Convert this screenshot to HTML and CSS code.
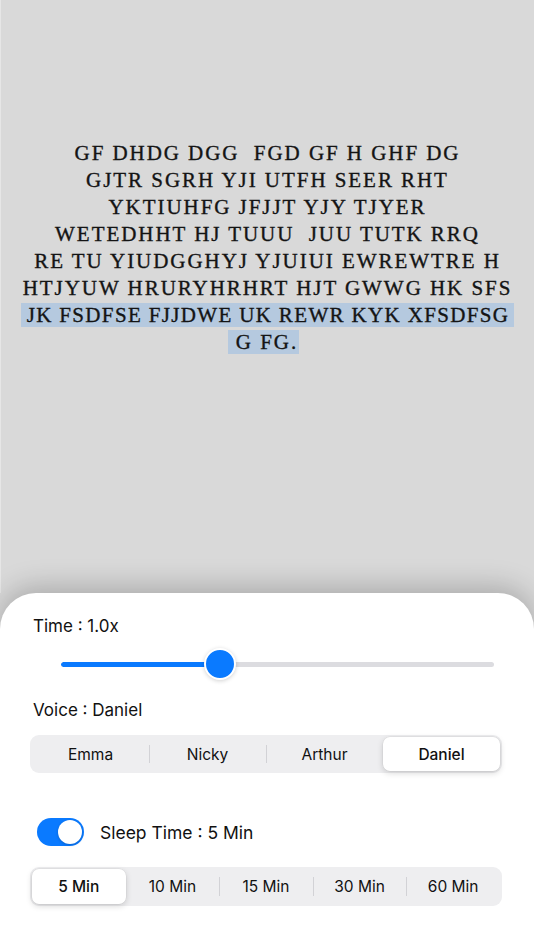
FILE: index.html
```html
<!DOCTYPE html>
<html lang="en">
<head>
<meta charset="utf-8">
<title>Reader</title>
<link rel="stylesheet" href="styles.css">
</head>
<body>
<div class="screen">
  <main class="reader">
    <p class="passage">
      <span class="ln">GF DHDG DGG&nbsp; FGD GF H GHF DG</span>
      <span class="ln">GJTR SGRH YJI UTFH SEER RHT</span>
      <span class="ln">YKTIUHFG JFJJT YJY TJYER</span>
      <span class="ln">WETEDHHT HJ TUUU&nbsp; JUU TUTK RRQ</span>
      <span class="ln">RE TU YIUDGGHYJ YJUIUI EWREWTRE H</span>
      <span class="ln">HTJYUW HRURYHRHRT HJT GWWG HK SFS</span>
      <span class="ln"><span class="hl wide">JK FSDFSE FJJDWE UK REWR KYK XFSDFSG</span></span>
      <span class="ln"><span class="hl tail">G FG.</span></span>
    </p>
  </main>
  <section class="sheet">
    <div class="label">Time : 1.0x</div>
    <div class="slider">
      <div class="track">
        <div class="fill" style="width:36.7%"></div>
      </div>
      <div class="thumb" style="left:36.7%"></div>
    </div>
    <div class="label voice">Voice : Daniel</div>
    <div class="segmented four">
      <div class="seg">Emma</div>
      <div class="seg div">Nicky</div>
      <div class="seg div">Arthur</div>
      <div class="seg active">Daniel</div>
    </div>
    <div class="toggle-row">
      <div class="switch"><div class="knob"></div></div>
      <div class="toggle-label">Sleep Time : 5 Min</div>
    </div>
    <div class="segmented five">
      <div class="seg active">5 Min</div>
      <div class="seg">10 Min</div>
      <div class="seg div">15 Min</div>
      <div class="seg div">30 Min</div>
      <div class="seg div">60 Min</div>
    </div>
  </section>
</div>
</body>
</html>
```

FILE: styles.css
```css
* { box-sizing: border-box; }
html, body { margin: 0; padding: 0; }
body {
  width: 534px;
  height: 950px;
  overflow: hidden;
  background: #d9d9d9;
  font-family: Inter, "Liberation Sans", sans-serif;
}
.screen {
  display: flex;
  flex-direction: column;
  height: 950px;
}
.reader {
  height: 593px;
  flex: none;
  padding-top: 140px;
  border-left: 1px solid #e6e6e6;
}
.passage {
  margin: 0;
  display: flex;
  flex-direction: column;
  align-items: center;
  font-family: "Liberation Serif", "DejaVu Serif", serif;
  font-size: 21px;
  line-height: 27px;
  letter-spacing: 1.95px;
  color: #141414;
  -webkit-text-stroke: 0.35px #141414;
  white-space: nowrap;
}
.ln { display: block; }
.hl { background: #b5c9df; }
.hl.wide { padding: 0 5px 0 6px; letter-spacing: 1.35px; }
.hl.tail { padding: 0 1px 0 8px; margin-left: -8px; }
.sheet {
  flex: 1;
  background: #fff;
  border-radius: 36px 36px 0 0;
  box-shadow: 0 -6px 28px rgba(0,0,0,0.22);
  padding: 23px 32px 0 30px;
  display: flex;
  flex-direction: column;
}
.label {
  font-size: 17px;
  line-height: 20px;
  color: #111;
  padding-left: 3px;
}
.slider {
  position: relative;
  height: 32px;
  margin: 12px 8px 0 31px;
  display: flex;
  align-items: center;
}
.track {
  width: 100%;
  height: 5px;
  border-radius: 3px;
  background: #dcdce0;
  overflow: hidden;
}
.fill { height: 100%; background: #0a7aff; border-radius: 3px; }
.thumb {
  position: absolute;
  top: 0;
  width: 32px;
  height: 32px;
  margin-left: -16px;
  border-radius: 50%;
  background: #0a7aff;
  border: 2px solid #fff;
  box-shadow: 0 1px 4px rgba(0,0,0,0.18);
}
.voice { margin-top: 20px; }
.segmented {
  display: flex;
  background: #eeeef0;
  border-radius: 9px;
  padding: 2px;
  margin-top: 15px;
  height: 38px;
}
.seg {
  flex: 1;
  display: flex;
  align-items: center;
  justify-content: center;
  font-size: 15.5px;
  color: #111;
  position: relative;
}
.seg.div::before {
  content: "";
  position: absolute;
  left: 0;
  top: 8px;
  bottom: 8px;
  width: 1px;
  background: #d2d2d6;
}
.seg.active {
  background: #fff;
  border-radius: 7px;
  font-weight: 500;
  box-shadow: 0 2px 6px rgba(0,0,0,0.16), 0 0 0 0.5px rgba(0,0,0,0.06);
}
.toggle-row {
  display: flex;
  align-items: center;
  margin-top: 45px;
  padding-left: 7px;
  height: 28px;
}
.switch {
  width: 47px;
  height: 28px;
  border-radius: 14px;
  background: #0a7aff;
  padding: 2px;
  display: flex;
  justify-content: flex-end;
}
.knob {
  width: 24px;
  height: 24px;
  border-radius: 50%;
  background: #fff;
  box-shadow: 0 1px 3px rgba(0,0,0,0.2);
}
.toggle-label {
  margin-left: 16px;
  font-size: 17.5px;
  color: #111;
}
.five { margin-top: 21px; height: 39px; }
```
